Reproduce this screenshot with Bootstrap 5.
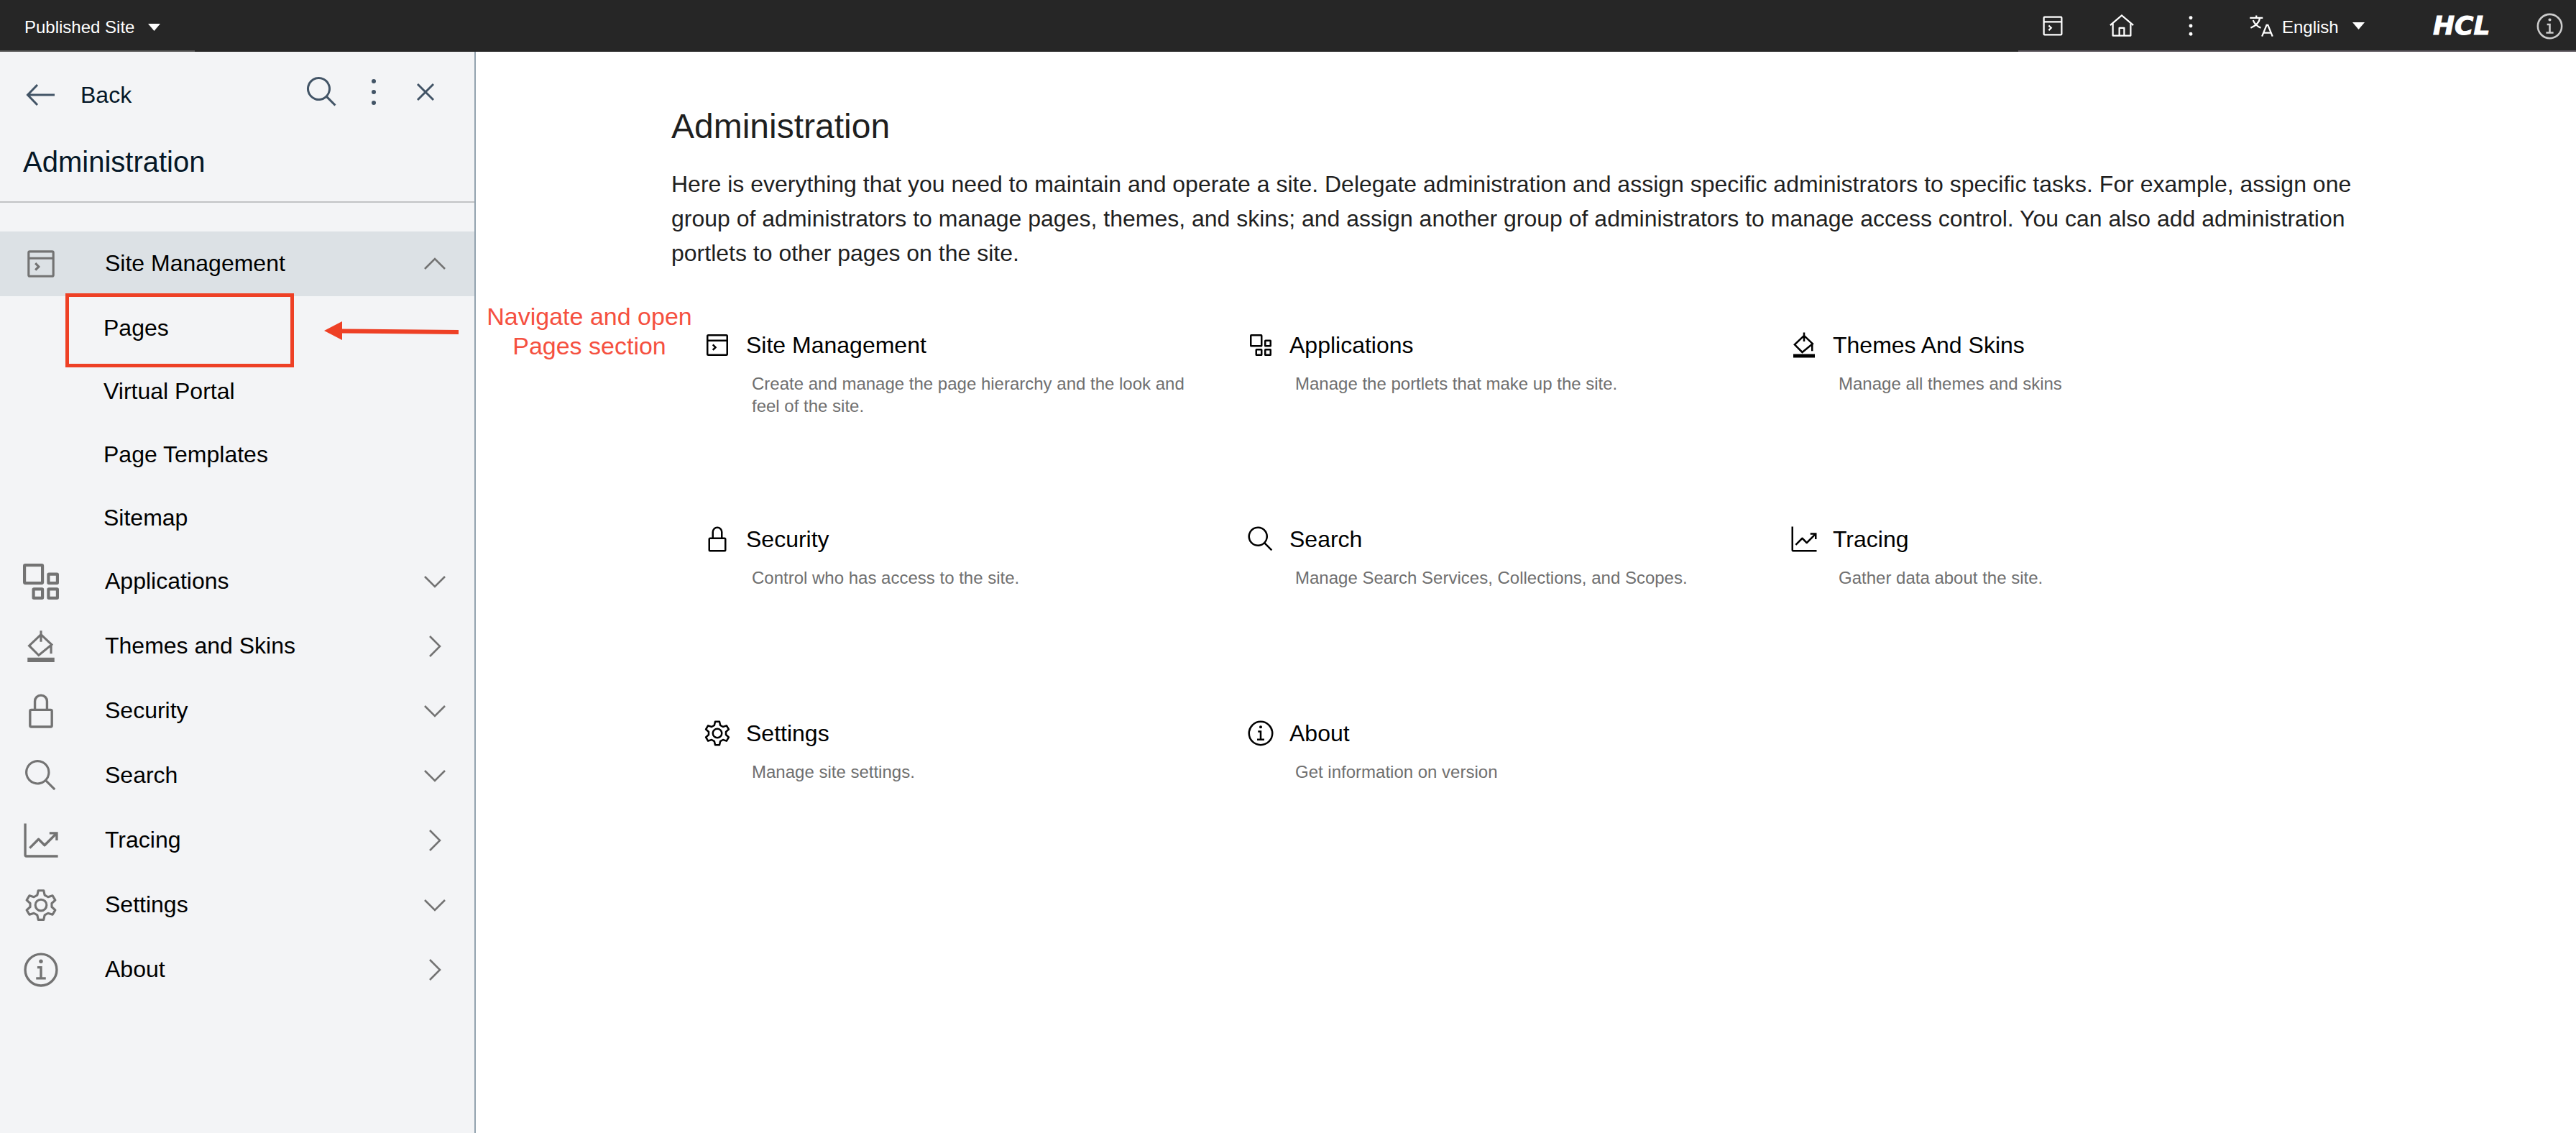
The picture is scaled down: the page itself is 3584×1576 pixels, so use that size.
<!DOCTYPE html>
<html lang="en">
<head>
<meta charset="utf-8">
<meta name="viewport" content="width=device-width, initial-scale=1">
<title>Administration</title>
<link href="https://cdn.jsdelivr.net/npm/bootstrap@5.3.0/dist/css/bootstrap.min.css" rel="stylesheet">
<style>
  body { font-family: "Liberation Sans", Arial, sans-serif; font-size: 32px; line-height: 40px; color: #000; background: #fff; }
  svg { flex-shrink: 0; display: block; }
  svg, .ico { fill: currentColor; }
  .ln { fill: none; stroke: currentColor; stroke-width: 2; }
  .i36 { width: 36px; height: 36px; }
  .i40 { width: 40px; height: 40px; }
  .i50 { width: 50px; height: 50px; }
  .i54 { width: 54px; height: 54px; }
  .i48 { width: 48px; height: 48px; }
  .plain { background: none; border: 0; padding: 0; color: inherit; text-align: left; }
  a { color: inherit; text-decoration: none; }

  /* top bar */
  .topbar { background: #262626; color: #fff; height: 72px; font-size: 24px; line-height: 32px; }
  .seg-left { width: 271px; padding: 6px 0 0 34px; border-bottom: 2px solid #545454; }
  .seg-left .plain { gap: 19px; }
  .seg-right { width: 776px; padding: 2px 16px 0 0; border-bottom: 2px solid #58535a; }
  .tool { width: 96px; }
  .lang { margin-left: 32px; gap: 11px; }
  .lang .caret-ico { margin-left: 8px; }
  .lang span { padding-top: 3px; }
  .brand { width: 128px; margin-left: 71px; font: italic bold 36px/40px "DejaVu Sans", sans-serif; text-align: center; -webkit-text-stroke: 1px #fff; }
  .about-btn { color: #ccc; }

  /* side navigation */
  .side { width: 662px; background: #f3f4f6; border-right: 2px solid #93a3af; min-height: calc(100vh - 72px); }
  .side-top { padding: 32px 44px 0 36px; gap: 24px; color: #425466; }
  .back { padding-top: 8px; gap: 36px; }
  .ink { color: #051727; }
  .side-title { font-size: 40px; line-height: 50px; font-weight: 400; margin: 48px 0 0; padding: 0 32px 30px; border-bottom: 2px solid #c1c3c5; }
  .side-nav { padding-top: 40px; }
  .nav-line { height: 90px; width: 100%; padding: 0 39px 0 30px; }
  .nav-line.open { background: #dce1e5; }
  .nav-line .slot { width: 54px; margin-right: 62px; color: #737373; }
  .nav-line .txt { padding-bottom: 2px; }
  .nav-line .chev { width: 32px; height: 32px; color: #737373; }
  .sub-line { height: 88px; padding-left: 144px; }

  /* content */
  .content { padding: 76px 272px 0; color: #1f1f1f; }
  .content h1 { font-size: 48px; line-height: 56px; font-weight: 400; margin: 0 0 28px; }
  .intro { font-size: 32px; line-height: 48px; margin: 0; }
  .tiles { padding: 84px 66px 0 44px; color: #000; }
  .tile { min-height: 270px; }
  .tile h2 { font-size: 32px; line-height: 40px; font-weight: 400; margin: 0 0 18px; gap: 20px; }
  .tile p { font-size: 24px; line-height: 31px; margin: 0; padding: 0 70px 0 68px; color: #6f6f6f; }

  /* annotations laid over the page */
  .mark-box { left: 91px; top: 408px; width: 318px; height: 103px; border: 5px solid #ee4025; pointer-events: none; }
  .mark-arrow { left: 450px; top: 446px; color: #ee4025; }
  .mark-note { left: 670px; top: 420px; width: 300px; margin: 0; font-size: 34px; line-height: 41px; color: #f5503f; text-align: center; }
</style>
<script src="https://cdn.jsdelivr.net/npm/bootstrap@5.3.0/dist/js/bootstrap.bundle.min.js"></script>
</head>
<body class="position-relative">

<svg width="0" height="0" class="position-absolute" aria-hidden="true">
  <symbol id="window" viewBox="0 0 32 32"><rect class="ln" x="5" y="5" width="22" height="22" rx="1"/><path class="ln" d="M5 11H27M11 15.500L14 18.500L11 21.500"/></symbol>
  <symbol id="apps" viewBox="0 0 24 24"><g class="ln"><rect x="1" y="1" width="12" height="12" rx=".5"/><rect x="17" y="7" width="6" height="6" rx=".3"/><rect x="7" y="17" width="6" height="6" rx=".3"/><rect x="17" y="17" width="6" height="6" rx=".3"/></g></symbol>
  <symbol id="paint" viewBox="0 0 32 32"><path class="ln" d="M16 2V12M16 5.500L5.500 15.500L14 24L25.500 14.500L16 5.500M25 14V22.500"/><path d="M4 26H28V30H4z"/></symbol>
  <symbol id="lock" viewBox="0 0 32 32"><path d="M24,14H22V8A6,6,0,0,0,10,8v6H8a2,2,0,0,0-2,2V28a2,2,0,0,0,2,2H24a2,2,0,0,0,2-2V16A2,2,0,0,0,24,14ZM12,8a4,4,0,0,1,8,0v6H12ZM24,28H8V16H24Z"/></symbol>
  <symbol id="search" viewBox="0 0 32 32"><path d="M29,27.586l-7.552-7.552a11.018,11.018,0,1,0-1.414,1.414L27.586,29ZM4,13a9,9,0,1,1,9,9A9.010,9.010,0,0,1,4,13Z"/></symbol>
  <symbol id="trace" viewBox="0 0 32 32"><path d="M4,2H2V28a2,2,0,0,0,2,2H30V28H4z"/><path d="M30,9H23v2h3.590L19,18.590l-4.290-4.300a1,1,0,0,0-1.420,0L6,21.590,7.410,23,14,16.410l4.290,4.300a1,1,0,0,0,1.420,0L28,12.410V16h2Z"/></symbol>
  <symbol id="gear" viewBox="0 0 32 32"><g class="ln" stroke-linejoin="round"><path d="M13.600 3L18.400 3L19.300 7.100L22.300 8.800L26.300 7.500L28.700 11.600L25.600 14.400L25.600 17.600L28.700 20.400L26.300 24.500L22.300 23.200L19.300 24.900L18.400 29L13.600 29L12.700 24.900L9.700 23.200L5.700 24.500L3.300 20.400L6.400 17.600L6.400 14.400L3.300 11.600L5.700 7.500L9.700 8.800L12.700 7.100Z"/><circle cx="16" cy="16" r="5"/></g></symbol>
  <symbol id="info" viewBox="0 0 32 32"><circle class="ln" cx="16" cy="16" r="13"/><path d="M17 22V13H13V15H15V22H12V24H20V22z"/><circle cx="16" cy="9" r="1.600"/></symbol>
  <symbol id="dots" viewBox="0 0 32 32"><circle cx="16" cy="6" r="2.200"/><circle cx="16" cy="16" r="2.200"/><circle cx="16" cy="26" r="2.200"/></symbol>
  <symbol id="home" viewBox="0 0 32 32"><path class="ln" d="M1.700 15.300L16 3L30.300 15.300"/><path class="ln" d="M5 13V28H27V13M13 28V18.500H19V28" stroke-linejoin="round"/></symbol>
  <symbol id="translate" viewBox="0 0 32 32"><path class="ln" d="M2 6H18M10 3V6M14.500 6C13.500 12 9 16 3 18.500M6 9C7.500 13 11 16.500 15.500 18.500"/><path class="ln" d="M17 29L22.700 15H24.300L30 29M19 24.500H28"/></symbol>
  <symbol id="caret" viewBox="0 0 17 10"><path d="M0 0H17L8.500 10z"/></symbol>
  <symbol id="down" viewBox="0 0 32 32"><path d="M2 9L16 23L30 9" fill="none" stroke="currentColor" stroke-width="2.600"/></symbol>
  <symbol id="up" viewBox="0 0 32 32"><path d="M2 23L16 9L30 23" fill="none" stroke="currentColor" stroke-width="2.600"/></symbol>
  <symbol id="right" viewBox="0 0 32 32"><path d="M9 2L23 16L9 30" fill="none" stroke="currentColor" stroke-width="2.600"/></symbol>
</svg>

<header class="topbar d-flex justify-content-between">
  <div class="seg-left d-flex align-items-center">
    <button type="button" class="plain d-flex align-items-center">Published Site <svg width="17" height="10"><use href="#caret"/></svg></button>
  </div>
  <div class="seg-right d-flex align-items-center">
    <button type="button" class="plain tool d-flex justify-content-center" aria-label="Site manager"><svg class="i36"><use href="#window"/></svg></button>
    <button type="button" class="plain tool d-flex justify-content-center" aria-label="Home"><svg class="i36"><use href="#home"/></svg></button>
    <button type="button" class="plain tool d-flex justify-content-center" aria-label="More"><svg class="i36"><use href="#dots"/></svg></button>
    <button type="button" class="plain lang d-flex align-items-center"><svg class="i36"><use href="#translate"/></svg><span>English</span><svg class="caret-ico" width="17" height="10"><use href="#caret"/></svg></button>
    <a href="#" class="brand">HCL</a>
    <button type="button" class="plain about-btn ms-auto" aria-label="Information"><svg width="41" height="41"><use href="#info"/></svg></button>
  </div>
</header>

<div class="d-flex">
  <aside class="side flex-shrink-0">
    <div class="side-top d-flex align-items-start">
      <a href="#" class="back d-flex align-items-center me-auto"><svg width="40" height="32" viewBox="0 0 40 32"><path d="M40 16H3M16 2L2.500 16L16 30" fill="none" stroke="currentColor" stroke-width="3"/></svg><span class="ink">Back</span></a>
      <button type="button" class="plain" aria-label="Search"><svg class="i48"><use href="#search"/></svg></button>
      <button type="button" class="plain" aria-label="Options"><svg class="i48" viewBox="0 0 48 48"><circle cx="24" cy="9" r="3"/><circle cx="24" cy="24" r="3"/><circle cx="24" cy="39" r="3"/></svg></button>
      <button type="button" class="plain" aria-label="Close"><svg class="i48" viewBox="0 0 48 48"><path d="M13 13L35 35M35 13L13 35" fill="none" stroke="currentColor" stroke-width="3"/></svg></button>
    </div>
    <h2 class="side-title ink">Administration</h2>
    <nav class="side-nav">
      <button type="button" class="plain nav-line open d-flex align-items-center"><span class="slot d-flex justify-content-center"><svg class="i50"><use href="#window"/></svg></span><span class="txt flex-grow-1">Site Management</span><svg class="chev"><use href="#up"/></svg></button>
      <a href="#" class="sub-line d-flex align-items-center">Pages</a>
      <a href="#" class="sub-line d-flex align-items-center">Virtual Portal</a>
      <a href="#" class="sub-line d-flex align-items-center">Page Templates</a>
      <a href="#" class="sub-line d-flex align-items-center">Sitemap</a>
      <button type="button" class="plain nav-line d-flex align-items-center"><span class="slot d-flex justify-content-center"><svg class="i50"><use href="#apps"/></svg></span><span class="txt flex-grow-1">Applications</span><svg class="chev"><use href="#down"/></svg></button>
      <a href="#" class="nav-line d-flex align-items-center"><span class="slot d-flex justify-content-center"><svg class="i50"><use href="#paint"/></svg></span><span class="txt flex-grow-1">Themes and Skins</span><svg class="chev"><use href="#right"/></svg></a>
      <button type="button" class="plain nav-line d-flex align-items-center"><span class="slot d-flex justify-content-center"><svg class="i54"><use href="#lock"/></svg></span><span class="txt flex-grow-1">Security</span><svg class="chev"><use href="#down"/></svg></button>
      <button type="button" class="plain nav-line d-flex align-items-center"><span class="slot d-flex justify-content-center"><svg class="i50"><use href="#search"/></svg></span><span class="txt flex-grow-1">Search</span><svg class="chev"><use href="#down"/></svg></button>
      <a href="#" class="nav-line d-flex align-items-center"><span class="slot d-flex justify-content-center"><svg class="i54"><use href="#trace"/></svg></span><span class="txt flex-grow-1">Tracing</span><svg class="chev"><use href="#right"/></svg></a>
      <button type="button" class="plain nav-line d-flex align-items-center"><span class="slot d-flex justify-content-center"><svg class="i50"><use href="#gear"/></svg></span><span class="txt flex-grow-1">Settings</span><svg class="chev"><use href="#down"/></svg></button>
      <a href="#" class="nav-line d-flex align-items-center"><span class="slot d-flex justify-content-center"><svg class="i54"><use href="#info"/></svg></span><span class="txt flex-grow-1">About</span><svg class="chev"><use href="#right"/></svg></a>
    </nav>
  </aside>

  <main class="content flex-grow-1">
    <h1>Administration</h1>
    <p class="intro">Here is everything that you need to maintain and operate a site. Delegate administration and assign specific administrators to specific tasks. For example, assign one group of administrators to manage pages, themes, and skins; and assign another group of administrators to manage access control. You can also add administration portlets to other pages on the site.</p>
    <div class="tiles">
      <div class="row g-0">
        <section class="tile col-4"><h2 class="d-flex"><svg class="i40"><use href="#window"/></svg><a href="#">Site Management</a></h2><p>Create and manage the page hierarchy and the look and feel of the site.</p></section>
        <section class="tile col-4"><h2 class="d-flex"><svg class="i40" viewBox="0 0 40 40"><use href="#apps" x="5" y="5" width="30" height="30"/></svg><a href="#">Applications</a></h2><p>Manage the portlets that make up the site.</p></section>
        <section class="tile col-4"><h2 class="d-flex"><svg class="i40"><use href="#paint"/></svg><a href="#">Themes And Skins</a></h2><p>Manage all themes and skins</p></section>
        <section class="tile col-4"><h2 class="d-flex"><svg class="i40"><use href="#lock"/></svg><a href="#">Security</a></h2><p>Control who has access to the site.</p></section>
        <section class="tile col-4"><h2 class="d-flex"><svg class="i40"><use href="#search"/></svg><a href="#">Search</a></h2><p>Manage Search Services, Collections, and Scopes.</p></section>
        <section class="tile col-4"><h2 class="d-flex"><svg class="i40"><use href="#trace"/></svg><a href="#">Tracing</a></h2><p>Gather data about the site.</p></section>
        <section class="tile col-4"><h2 class="d-flex"><svg class="i40"><use href="#gear"/></svg><a href="#">Settings</a></h2><p>Manage site settings.</p></section>
        <section class="tile col-4"><h2 class="d-flex"><svg class="i40"><use href="#info"/></svg><a href="#">About</a></h2><p>Get information on version</p></section>
      </div>
    </div>
  </main>
</div>

<div class="mark-box position-absolute"></div>
<svg class="mark-arrow position-absolute" width="190" height="30" viewBox="0 0 190 30"><path d="M1 14L26 1V27z"/><path d="M24 14.500L188 16" fill="none" stroke="currentColor" stroke-width="6"/></svg>
<p class="mark-note position-absolute">Navigate and open Pages section</p>
</body>
</html>
